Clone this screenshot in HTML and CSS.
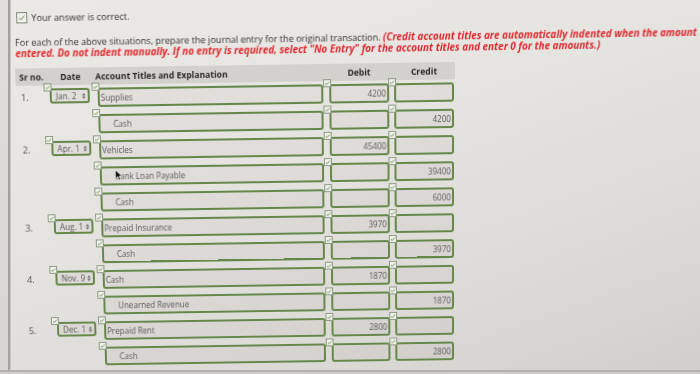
FILE: index.html
```html
<!DOCTYPE html>
<html lang="en">
<head>
<meta charset="utf-8">
<title>Journal entry</title>
<link rel="stylesheet" href="styles.css">
</head>
<body>
<div class="screen">
  <div class="bezel"></div>
  <main class="page">
    <div class="status">
      <svg class="status-box" width="11" height="11" viewBox="0 0 11 11"><rect x="0.5" y="0.5" width="10" height="10" fill="#f0f0ed" stroke="#7e8a74"/><path d="M2.8 5.6 L4.7 7.5 L8.2 3.5" fill="none" stroke="#5f8a3e" stroke-width="1"/></svg>
      <span>Your answer is correct.</span>
    </div>
    <p class="instructions"><span class="line">For each of the above situations, prepare the journal entry for the original transaction. <em class="note">(Credit account titles are automatically indented when the amount</em></span><span class="line"><em class="note">entered. Do not indent manually. If no entry is required, select "No Entry" for the account titles and enter 0 for the amounts.)</em></span></p>

    <div class="journal">
      <div class="jhead">
        <span class="h-sr">Sr no.</span>
        <span class="h-date">Date</span>
        <span class="h-acct">Account Titles and Explanation</span>
        <span class="h-amt h-debit">Debit</span>
        <span class="h-amt h-credit">Credit</span>
      </div>

      <!-- 1 -->
      <div class="row">
        <span class="sr">1.</span>
        <div class="slot"><div class="field date"><svg class="tick" viewBox="0 0 8 8"><rect x="0.5" y="0.5" width="7" height="7"/><path d="M2 4.3 L3.3 5.5 L6 2.6"/></svg><span class="dtext">Jan. 2</span><svg class="arrows" viewBox="0 0 4 7"><path d="M0 3 L2 0 L4 3Z M0 4 L2 7 L4 4Z"/></svg></div></div>
        <div class="slot"><div class="field acct"><svg class="tick" viewBox="0 0 8 8"><rect x="0.5" y="0.5" width="7" height="7"/><path d="M2 4.3 L3.3 5.5 L6 2.6"/></svg>Supplies</div></div>
        <div class="slot debit"><div class="field amt"><svg class="tick" viewBox="0 0 8 8"><rect x="0.5" y="0.5" width="7" height="7"/><path d="M2 4.3 L3.3 5.5 L6 2.6"/></svg>4200</div></div>
        <div class="slot credit"><div class="field amt"><svg class="tick" viewBox="0 0 8 8"><rect x="0.5" y="0.5" width="7" height="7"/><path d="M2 4.3 L3.3 5.5 L6 2.6"/></svg></div></div>
      </div>
      <div class="row">
        <span class="sr"></span>
        <div class="slot"></div>
        <div class="slot"><div class="field acct cr"><svg class="tick" viewBox="0 0 8 8"><rect x="0.5" y="0.5" width="7" height="7"/><path d="M2 4.3 L3.3 5.5 L6 2.6"/></svg>Cash</div></div>
        <div class="slot debit"><div class="field amt"><svg class="tick" viewBox="0 0 8 8"><rect x="0.5" y="0.5" width="7" height="7"/><path d="M2 4.3 L3.3 5.5 L6 2.6"/></svg></div></div>
        <div class="slot credit"><div class="field amt"><svg class="tick" viewBox="0 0 8 8"><rect x="0.5" y="0.5" width="7" height="7"/><path d="M2 4.3 L3.3 5.5 L6 2.6"/></svg>4200</div></div>
      </div>

      <!-- 2 -->
      <div class="row">
        <span class="sr">2.</span>
        <div class="slot"><div class="field date"><svg class="tick" viewBox="0 0 8 8"><rect x="0.5" y="0.5" width="7" height="7"/><path d="M2 4.3 L3.3 5.5 L6 2.6"/></svg><span class="dtext">Apr. 1</span><svg class="arrows" viewBox="0 0 4 7"><path d="M0 3 L2 0 L4 3Z M0 4 L2 7 L4 4Z"/></svg></div></div>
        <div class="slot"><div class="field acct"><svg class="tick" viewBox="0 0 8 8"><rect x="0.5" y="0.5" width="7" height="7"/><path d="M2 4.3 L3.3 5.5 L6 2.6"/></svg>Vehicles</div></div>
        <div class="slot debit"><div class="field amt"><svg class="tick" viewBox="0 0 8 8"><rect x="0.5" y="0.5" width="7" height="7"/><path d="M2 4.3 L3.3 5.5 L6 2.6"/></svg>45400</div></div>
        <div class="slot credit"><div class="field amt"><svg class="tick" viewBox="0 0 8 8"><rect x="0.5" y="0.5" width="7" height="7"/><path d="M2 4.3 L3.3 5.5 L6 2.6"/></svg></div></div>
      </div>
      <div class="row">
        <span class="sr"></span>
        <div class="slot"></div>
        <div class="slot"><div class="field acct cr"><svg class="tick" viewBox="0 0 8 8"><rect x="0.5" y="0.5" width="7" height="7"/><path d="M2 4.3 L3.3 5.5 L6 2.6"/></svg>Bank Loan Payable<svg class="cursor" width="8" height="12" viewBox="0 0 8 12"><path d="M0.6 0.6 L0.6 9.6 L2.9 7.5 L4.4 10.9 L5.9 10.3 L4.4 7 L7.3 7 Z" fill="#111" stroke="#fff" stroke-width="0.7"/></svg></div></div>
        <div class="slot debit"><div class="field amt"><svg class="tick" viewBox="0 0 8 8"><rect x="0.5" y="0.5" width="7" height="7"/><path d="M2 4.3 L3.3 5.5 L6 2.6"/></svg></div></div>
        <div class="slot credit"><div class="field amt"><svg class="tick" viewBox="0 0 8 8"><rect x="0.5" y="0.5" width="7" height="7"/><path d="M2 4.3 L3.3 5.5 L6 2.6"/></svg>39400</div></div>
      </div>
      <div class="row">
        <span class="sr"></span>
        <div class="slot"></div>
        <div class="slot"><div class="field acct cr"><svg class="tick" viewBox="0 0 8 8"><rect x="0.5" y="0.5" width="7" height="7"/><path d="M2 4.3 L3.3 5.5 L6 2.6"/></svg>Cash</div></div>
        <div class="slot debit"><div class="field amt"><svg class="tick" viewBox="0 0 8 8"><rect x="0.5" y="0.5" width="7" height="7"/><path d="M2 4.3 L3.3 5.5 L6 2.6"/></svg></div></div>
        <div class="slot credit"><div class="field amt"><svg class="tick" viewBox="0 0 8 8"><rect x="0.5" y="0.5" width="7" height="7"/><path d="M2 4.3 L3.3 5.5 L6 2.6"/></svg>6000</div></div>
      </div>

      <!-- 3 -->
      <div class="row">
        <span class="sr">3.</span>
        <div class="slot"><div class="field date"><svg class="tick" viewBox="0 0 8 8"><rect x="0.5" y="0.5" width="7" height="7"/><path d="M2 4.3 L3.3 5.5 L6 2.6"/></svg><span class="dtext">Aug. 1</span><svg class="arrows" viewBox="0 0 4 7"><path d="M0 3 L2 0 L4 3Z M0 4 L2 7 L4 4Z"/></svg></div></div>
        <div class="slot"><div class="field acct"><svg class="tick" viewBox="0 0 8 8"><rect x="0.5" y="0.5" width="7" height="7"/><path d="M2 4.3 L3.3 5.5 L6 2.6"/></svg>Prepaid Insurance</div></div>
        <div class="slot debit"><div class="field amt"><svg class="tick" viewBox="0 0 8 8"><rect x="0.5" y="0.5" width="7" height="7"/><path d="M2 4.3 L3.3 5.5 L6 2.6"/></svg>3970</div></div>
        <div class="slot credit"><div class="field amt"><svg class="tick" viewBox="0 0 8 8"><rect x="0.5" y="0.5" width="7" height="7"/><path d="M2 4.3 L3.3 5.5 L6 2.6"/></svg></div></div>
      </div>
      <div class="row">
        <span class="sr"></span>
        <div class="slot"></div>
        <div class="slot"><div class="field acct cr"><svg class="tick" viewBox="0 0 8 8"><rect x="0.5" y="0.5" width="7" height="7"/><path d="M2 4.3 L3.3 5.5 L6 2.6"/></svg>Cash</div></div>
        <div class="slot debit"><div class="field amt"><svg class="tick" viewBox="0 0 8 8"><rect x="0.5" y="0.5" width="7" height="7"/><path d="M2 4.3 L3.3 5.5 L6 2.6"/></svg></div></div>
        <div class="slot credit"><div class="field amt"><svg class="tick" viewBox="0 0 8 8"><rect x="0.5" y="0.5" width="7" height="7"/><path d="M2 4.3 L3.3 5.5 L6 2.6"/></svg>3970</div></div>
      </div>

      <!-- 4 -->
      <div class="row">
        <span class="sr">4.</span>
        <div class="slot"><div class="field date"><svg class="tick" viewBox="0 0 8 8"><rect x="0.5" y="0.5" width="7" height="7"/><path d="M2 4.3 L3.3 5.5 L6 2.6"/></svg><span class="dtext">Nov. 9</span><svg class="arrows" viewBox="0 0 4 7"><path d="M0 3 L2 0 L4 3Z M0 4 L2 7 L4 4Z"/></svg></div></div>
        <div class="slot"><div class="field acct"><svg class="tick" viewBox="0 0 8 8"><rect x="0.5" y="0.5" width="7" height="7"/><path d="M2 4.3 L3.3 5.5 L6 2.6"/></svg>Cash</div></div>
        <div class="slot debit"><div class="field amt"><svg class="tick" viewBox="0 0 8 8"><rect x="0.5" y="0.5" width="7" height="7"/><path d="M2 4.3 L3.3 5.5 L6 2.6"/></svg>1870</div></div>
        <div class="slot credit"><div class="field amt"><svg class="tick" viewBox="0 0 8 8"><rect x="0.5" y="0.5" width="7" height="7"/><path d="M2 4.3 L3.3 5.5 L6 2.6"/></svg></div></div>
      </div>
      <div class="row">
        <span class="sr"></span>
        <div class="slot"></div>
        <div class="slot"><div class="field acct cr"><svg class="tick" viewBox="0 0 8 8"><rect x="0.5" y="0.5" width="7" height="7"/><path d="M2 4.3 L3.3 5.5 L6 2.6"/></svg>Unearned Revenue</div></div>
        <div class="slot debit"><div class="field amt"><svg class="tick" viewBox="0 0 8 8"><rect x="0.5" y="0.5" width="7" height="7"/><path d="M2 4.3 L3.3 5.5 L6 2.6"/></svg></div></div>
        <div class="slot credit"><div class="field amt"><svg class="tick" viewBox="0 0 8 8"><rect x="0.5" y="0.5" width="7" height="7"/><path d="M2 4.3 L3.3 5.5 L6 2.6"/></svg>1870</div></div>
      </div>

      <!-- 5 -->
      <div class="row">
        <span class="sr">5.</span>
        <div class="slot"><div class="field date"><svg class="tick" viewBox="0 0 8 8"><rect x="0.5" y="0.5" width="7" height="7"/><path d="M2 4.3 L3.3 5.5 L6 2.6"/></svg><span class="dtext">Dec. 1</span><svg class="arrows" viewBox="0 0 4 7"><path d="M0 3 L2 0 L4 3Z M0 4 L2 7 L4 4Z"/></svg></div></div>
        <div class="slot"><div class="field acct"><svg class="tick" viewBox="0 0 8 8"><rect x="0.5" y="0.5" width="7" height="7"/><path d="M2 4.3 L3.3 5.5 L6 2.6"/></svg>Prepaid Rent</div></div>
        <div class="slot debit"><div class="field amt"><svg class="tick" viewBox="0 0 8 8"><rect x="0.5" y="0.5" width="7" height="7"/><path d="M2 4.3 L3.3 5.5 L6 2.6"/></svg>2800</div></div>
        <div class="slot credit"><div class="field amt"><svg class="tick" viewBox="0 0 8 8"><rect x="0.5" y="0.5" width="7" height="7"/><path d="M2 4.3 L3.3 5.5 L6 2.6"/></svg></div></div>
      </div>
      <div class="row">
        <span class="sr"></span>
        <div class="slot"></div>
        <div class="slot"><div class="field acct cr"><svg class="tick" viewBox="0 0 8 8"><rect x="0.5" y="0.5" width="7" height="7"/><path d="M2 4.3 L3.3 5.5 L6 2.6"/></svg>Cash</div></div>
        <div class="slot debit"><div class="field amt"><svg class="tick" viewBox="0 0 8 8"><rect x="0.5" y="0.5" width="7" height="7"/><path d="M2 4.3 L3.3 5.5 L6 2.6"/></svg></div></div>
        <div class="slot credit"><div class="field amt"><svg class="tick" viewBox="0 0 8 8"><rect x="0.5" y="0.5" width="7" height="7"/><path d="M2 4.3 L3.3 5.5 L6 2.6"/></svg>2800</div></div>
      </div>
    </div>
  </main>
</div>
</body>
</html>
```

FILE: styles.css
```css
html, body {
  margin: 0;
  padding: 0;
  width: 700px;
  height: 374px;
  overflow: hidden;
  background: #cfcdca;
}

.screen {
  display: flex;
  width: 700px;
  height: 372px;
  border-bottom: 2px solid #b3b1ae;
  box-sizing: border-box;
  overflow: hidden;
  background: linear-gradient(160deg, #ebe9e6 0%, #e6e4e1 40%, #dcdad7 75%, #d1cfcc 100%);
  font-family: "Open Sans", "Noto Sans", sans-serif;
  color: #2f2f2f;
}

.bezel {
  flex: 0 0 8px;
  background: linear-gradient(180deg, #e0dedb, #d7d5d2);
  border-right: 2px solid #a4a29f;
  box-shadow: 1px 0 0 #c9c7c4;
}

.page {
  flex: 1;
  padding-left: 6px;
  transform-origin: 445px 64px;
  transform: matrix3d(1, -0.015, 0, 0, 0, 1.02, 0, 0.0000785, 0, 0, 1, 0, 0, 0, 0, 1);
}

/* status line */
.status {
  display: flex;
  align-items: center;
  gap: 4px;
  height: 11px;
  margin: 7px 0 0 2px;
  font-size: 9.2px;
  line-height: 11px;
  color: #333;
}
.status-box { display: block; flex: none; }

/* instructions */
.instructions {
  display: flex;
  flex-direction: column;
  margin: 13px 0 0;
  font-size: 9.1px;
  white-space: nowrap;
  color: #333;
}
.instructions .line {
  display: block;
  height: 11px;
  line-height: 11px;
  overflow: visible;
}
.note {
  font-weight: 700;
  font-style: italic;
  color: #df2a2f;
  font-size: 9.9px;
  line-height: 11px;
}

/* journal */
.journal {
  margin-top: 9px;
  width: 438px;
}

.jhead {
  display: grid;
  grid-template-columns: 33px 48px 226px 66px 65px;
  align-items: center;
  height: 17px;
  margin: 0 -1px;
  padding: 0 1px;
  background: #d3d1ce;
  font-size: 8.6px;
  font-weight: 700;
  color: #2a2a2a;
}
.h-sr { padding-left: 3px; }
.h-date { padding-left: 11px; }
.h-acct { margin-left: -2px; }
.h-debit { padding-left: 6px; text-align: center; }
.h-credit { padding-left: 5px; text-align: center; }

.row {
  display: grid;
  grid-template-columns: 33px 48px 226px 66px 65px;
  height: 26px;
}

.sr {
  margin-top: 2px;
  padding-left: 4px;
  font-size: 9.4px;
  line-height: 19px;
  color: #555;
}

.slot { padding-top: 3px; }
.debit { padding-left: 6px; }
.credit { padding-left: 5px; }

.field {
  position: relative;
  box-sizing: border-box;
  height: 19px;
  border: 2px solid #66874a;
  border-radius: 3px;
  background: rgba(60, 55, 50, 0.045);
  padding: 0 2px 0 1px;
  font-size: 8.1px;
  line-height: 15px;
  color: #5b5b5b;
  white-space: nowrap;
}

.field.cr { padding-left: 13px; }
.field.amt { text-align: right; padding-right: 1px; }

.field.date {
  display: flex;
  align-items: center;
  gap: 2px;
  width: 40px;
  height: 15px;
  line-height: 11px;
  padding: 0 2px 0 4px;
}

.dtext {
  flex: 1;
  font-size: 8.2px;
}

.arrows {
  flex: none;
  width: 4px;
  height: 6px;
  fill: #6a6a6a;
}

.tick {
  position: absolute;
  left: -8px;
  top: -7px;
  width: 8px;
  height: 8px;
  z-index: 1;
}
.tick rect { fill: #f0f0ec; stroke: #8e9a84; stroke-width: 1; }
.tick path { fill: none; stroke: #5f8a3e; stroke-width: 0.9; }

.cursor {
  position: absolute;
  left: 13px;
  top: 1px;
  z-index: 2;
}
```
